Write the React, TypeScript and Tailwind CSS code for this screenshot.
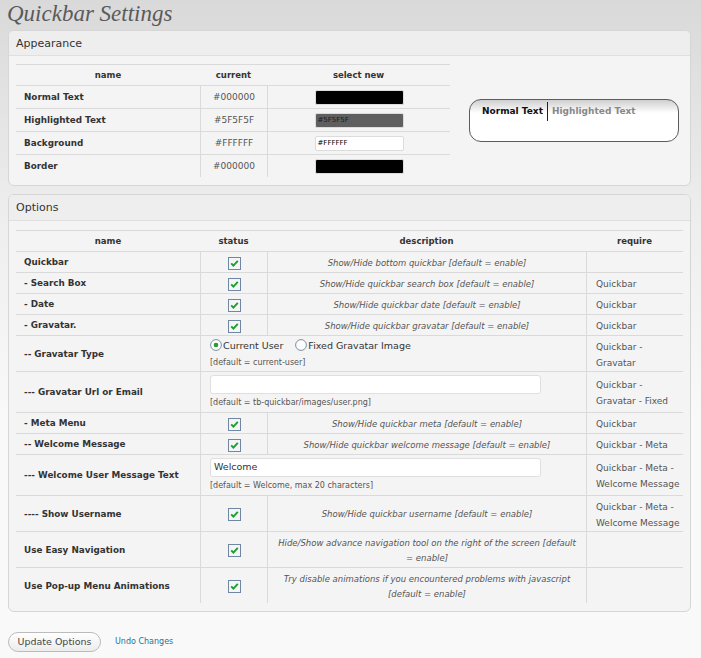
import React from "react";

const cell = "flex items-center";
const line = "border-[#dadada]";

function Check() {
  return (
    <svg width="13" height="13" viewBox="0 0 13 13" aria-hidden>
      <rect x="0.5" y="0.5" width="12" height="12" fill="#f3f5f8" stroke="#6f87a3" />
      <path d="M3.2 6.4 L5.4 8.7 L9.8 3.9" stroke="#1f9e2a" strokeWidth="1.9" fill="none" />
    </svg>
  );
}

function Radio({ on }: { on?: boolean }) {
  return (
    <svg width="12" height="12" viewBox="0 0 12 12" aria-hidden className="shrink-0">
      <circle cx="6" cy="6" r="5.4" fill="#fdfdfd" stroke="#7d8fa5" strokeWidth="1" />
      {on && <circle cx="6" cy="6" r="2.3" fill="#2a9a34" />}
    </svg>
  );
}

function Panel({ title, head = "h-[25px]", children }: { title: string; head?: string; children: React.ReactNode }) {
  return (
    <section className="overflow-hidden rounded-[6px] border border-[#d6d6d6] bg-[#f4f4f4]">
      <h3 className={`${head} border-b border-[#dfdfdf] bg-[#eeeeee] pl-[7px] pt-[2px] text-[11px] leading-[22px] text-[#333]`}>
        {title}
      </h3>
      {children}
    </section>
  );
}

const colors = [
  { name: "Normal Text", cur: "#000000", bg: "bg-[#000000]", text: "" },
  { name: "Highlighted Text", cur: "#5F5F5F", bg: "bg-[#5f5f5f]", text: "#5F5F5F" },
  { name: "Background", cur: "#FFFFFF", bg: "bg-white", text: "#FFFFFF" },
  { name: "Border", cur: "#000000", bg: "bg-[#000000]", text: "" },
];

type Opt = {
  name: string;
  desc?: React.ReactNode;
  req?: React.ReactNode;
  h: string;
  custom?: React.ReactNode;
};

const options: Opt[] = [
  { name: "Quickbar", desc: "Show/Hide bottom quickbar [default = enable]", h: "h-[21px]" },
  { name: "- Search Box", desc: "Show/Hide quickbar search box [default = enable]", req: "Quickbar", h: "h-[21px]" },
  { name: "- Date", desc: "Show/Hide quickbar date [default = enable]", req: "Quickbar", h: "h-[21px]" },
  { name: "- Gravatar.", desc: "Show/Hide quickbar gravatar [default = enable]", req: "Quickbar", h: "h-[21px]" },
  {
    name: "-- Gravatar Type",
    h: "h-[36px]",
    req: (
      <>
        Quickbar -<br />
        Gravatar
      </>
    ),
    custom: (
      <div className="flex flex-col justify-center">
        <div className="flex items-center text-[9.5px] leading-[17px] text-[#333]">
          <Radio on />
          <span className="ml-[1px]">Current User</span>
          <span className="ml-[12px]">
            <Radio />
          </span>
          <span className="ml-[1px]">Fixed Gravatar Image</span>
        </div>
        <div className="text-[8px] leading-[17px] text-[#555]">[default = current-user]</div>
      </div>
    ),
  },
  {
    name: "--- Gravatar Url or Email",
    h: "h-[41px]",
    req: (
      <>
        Quickbar -<br />
        Gravatar - Fixed
      </>
    ),
    custom: (
      <div className="flex flex-col pt-[3px]">
        <div className="h-[19px] w-[331px] rounded-[3px] border border-[#dfdfdf] bg-white" />
        <div className="text-[8px] leading-[17px] text-[#555]">[default = tb-quickbar/images/user.png]</div>
      </div>
    ),
  },
  { name: "- Meta Menu", desc: "Show/Hide quickbar meta [default = enable]", req: "Quickbar", h: "h-[21px]" },
  { name: "-- Welcome Message", desc: "Show/Hide quickbar welcome message [default = enable]", req: "Quickbar - Meta", h: "h-[21px]" },
  {
    name: "--- Welcome User Message Text",
    h: "h-[41px]",
    req: (
      <>
        Quickbar - Meta -<br />
        Welcome Message
      </>
    ),
    custom: (
      <div className="flex flex-col pt-[3px]">
        <div className="flex h-[19px] w-[331px] items-center rounded-[3px] border border-[#dfdfdf] bg-white pl-[3px] text-[9.5px] text-[#333]">
          Welcome
        </div>
        <div className="text-[8px] leading-[17px] text-[#555]">[default = Welcome, max 20 characters]</div>
      </div>
    ),
  },
  {
    name: "---- Show Username",
    desc: "Show/Hide quickbar username [default = enable]",
    req: (
      <>
        Quickbar - Meta -<br />
        Welcome Message
      </>
    ),
    h: "h-[36px]",
  },
  {
    name: "Use Easy Navigation",
    desc: (
      <>
        Hide/Show advance navigation tool on the right of the screen [default
        <br />= enable]
      </>
    ),
    h: "h-[36px]",
  },
  {
    name: "Use Pop-up Menu Animations",
    desc: (
      <>
        Try disable animations if you encountered problems with javascript
        <br />
        [default = enable]
      </>
    ),
    h: "h-[36px]",
  },
];

export default function App() {
  return (
    <div className="min-h-screen bg-[linear-gradient(to_bottom,#d9d9d9_0px,#eeeeee_220px,#f9f9f9_420px)] pl-[8px] pr-[10px] font-['DejaVu_Sans',Verdana,sans-serif] text-[#333]">
      <h2 className="h-[30px] font-['Liberation_Serif',Georgia,serif] text-[23px] italic leading-[27px] text-[#5a5a5a]">
        <span className="-ml-[1px]">Quickbar Settings</span>
      </h2>

      {/* Appearance */}
      <Panel title="Appearance">
        <div className="flex items-center px-[7px] pt-[8px] pb-[8px]">
          <div className="w-[434px] shrink-0">
            <div className={`grid h-[21px] grid-cols-[184px_67px_183px] border-t ${line} pt-px text-[8.5px] font-bold text-[#333]`}>
              <div className={`${cell} justify-center`}>name</div>
              <div className={`${cell} justify-center`}>current</div>
              <div className={`${cell} justify-center`}>select new</div>
            </div>
            {colors.map((c) => (
              <div key={c.name} className={`grid h-[23px] grid-cols-[184px_67px_183px] border-t ${line}`}>
                <div className={`${cell} pl-[8px] pt-[2px] text-[8.8px] font-bold text-[#333]`}>{c.name}</div>
                <div className={`${cell} justify-center border-l ${line} pt-[2px] text-[9px] text-[#555]`}>{c.cur}</div>
                <div className={`${cell} justify-center border-l ${line} pt-px`}>
                  <div
                    className={`flex h-[15px] w-[89px] items-center rounded-[2px] border border-[#dcdcdc] ${c.bg} pl-[2px] text-[7px] ${c.bg === "bg-white" ? "text-black" : "text-[#1a1a1a]"}`}
                  >
                    {c.text}
                  </div>
                </div>
              </div>
            ))}
          </div>

          {/* Preview */}
          <div className="ml-[19px] h-[43px] w-[210px] rounded-[12px] border border-[#5c5c5c] bg-[linear-gradient(to_bottom,#cfcfcf_0px,#ffffff_13px)] pl-[12px] pt-[2px]">
            <div className="flex h-[19px] items-center text-[9px] font-bold">
              <span className="pr-[4px] text-[#111]">Normal Text</span>
              <span className="h-[19px] w-px bg-[#222]" />
              <span className="pl-[4px] text-[#888]">Highlighted Text</span>
            </div>
          </div>
        </div>
      </Panel>

      {/* Options */}
      <div className="mt-[8px]">
        <Panel title="Options" head="h-[26px]">
          <div className="px-[7px] pt-[9px] pb-[8px]">
            <div className={`grid h-[21px] grid-cols-[184px_67px_319px_97px] border-t ${line} pt-px text-[8.5px] font-bold text-[#333]`}>
              <div className={`${cell} justify-center`}>name</div>
              <div className={`${cell} justify-center`}>status</div>
              <div className={`${cell} justify-center`}>description</div>
              <div className={`${cell} justify-center`}>require</div>
            </div>
            {options.map((o) => (
              <div key={o.name} className={`grid ${o.h} grid-cols-[184px_67px_319px_97px] border-t ${line}`}>
                <div className={`${cell} pl-[8px] pt-[2px] text-[8.8px] font-bold text-[#333]`}>{o.name}</div>
                {o.custom ? (
                  <div className={`col-span-2 flex border-l ${line} pl-[9px]`}>{o.custom}</div>
                ) : (
                  <>
                    <div className={`${cell} justify-center border-l ${line} pt-[2px]`}>
                      <Check />
                    </div>
                    <div className={`${cell} justify-center border-l ${line} pt-[2px] text-center text-[8.5px] italic leading-[15px] text-[#555]`}>
                      <span>{o.desc}</span>
                    </div>
                  </>
                )}
                <div className={`${cell} border-l ${line} pl-[9px] pt-[2px] text-[9px] leading-[16px] text-[#555]`}>
                  <span>{o.req}</span>
                </div>
              </div>
            ))}
          </div>
        </Panel>
      </div>

      {/* Actions */}
      <div className="mt-[20px] flex items-center">
        <button className="h-[20px] w-[93px] rounded-full border border-[#bbbbbb] bg-[linear-gradient(to_bottom,#ffffff,#ececec)] text-[9.5px] text-[#464646]">
          Update Options
        </button>
        <a href="#" className="ml-[14px] text-[8px] text-[#21759b]">
          Undo Changes
        </a>
      </div>
    </div>
  );
}
